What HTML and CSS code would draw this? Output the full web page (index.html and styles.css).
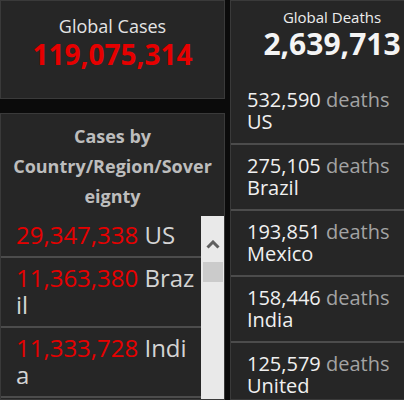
FILE: index.html
```html
<!DOCTYPE html>
<html lang="en">
<head>
    <meta charset="UTF-8">
    <title>COVID-19 Dashboard</title>
    <link rel="stylesheet" href="styles.css">
</head>
<body>
    <div class="dashboard">
        <div class="left-column">
            <div class="panel total-cases">
                <div class="total-title">Global Cases</div>
                <div class="total-value">119,075,314</div>
            </div>

            <div class="panel cases-list">
                <h2 class="list-title">Cases by<br>Country/Region/Sovereignty</h2>
                <div class="list-wrap">
                    <ul class="case-items">
                        <li><span class="count">29,347,338</span> US</li>
                        <li><span class="count">11,363,380</span> Brazil</li>
                        <li><span class="count">11,333,728</span> India</li>
                    </ul>
                    <div class="scrollbar">
                        <svg class="scroll-up" width="14" height="9" viewBox="0 0 14 9">
                            <path d="M1.5 7.5 L7 2 L12.5 7.5" fill="none" stroke="#5f5f5f" stroke-width="3"/>
                        </svg>
                        <div class="scroll-thumb"></div>
                    </div>
                </div>
            </div>
        </div>

        <div class="panel deaths">
            <div class="deaths-header">
                <div class="deaths-title">Global Deaths</div>
                <div class="deaths-value">2,639,713</div>
            </div>
            <ul class="death-items">
                <li><span class="num">532,590</span> <span class="unit">deaths</span><br>US</li>
                <li><span class="num">275,105</span> <span class="unit">deaths</span><br>Brazil</li>
                <li><span class="num">193,851</span> <span class="unit">deaths</span><br>Mexico</li>
                <li><span class="num">158,446</span> <span class="unit">deaths</span><br>India</li>
                <li><span class="num">125,579</span> <span class="unit">deaths</span><br>United Kingdom</li>
            </ul>
        </div>
    </div>
</body>
</html>
```

FILE: styles.css
```css
body {
    margin: 0;
    background-color: #0b0b0b;
    font-family: "Open Sans", "Noto Sans", sans-serif;
    overflow: hidden;
}
ul {
    list-style: none;
    margin: 0;
    padding: 0;
}
.dashboard {
    display: grid;
    grid-template-columns: 225px 204px;
    column-gap: 5px;
    height: 400px;
    width: 434px;
}
.left-column {
    display: flex;
    flex-direction: column;
    gap: 14px;
    min-height: 0;
}
.panel {
    background-color: #262626;
    border: 1px solid #3a3a3a;
    box-sizing: border-box;
    overflow: hidden;
}

/* Global cases */
.total-cases {
    height: 99px;
    padding-top: 13px;
    text-align: center;
}
.total-title {
    font-size: 18px;
    line-height: 24px;
    color: #e4e4e4;
}
.total-value {
    font-size: 28px;
    line-height: 32px;
    font-weight: 700;
    color: #e60000;
}

/* Cases list */
.cases-list {
    flex: 1;
    display: flex;
    flex-direction: column;
    min-height: 0;
}
.list-title {
    margin: 0;
    padding: 7px 9px 5px;
    font-size: 18px;
    line-height: 30px;
    font-weight: 700;
    color: #bdbdbd;
    text-align: center;
    word-break: break-all;
}
.list-wrap {
    flex: 1;
    display: flex;
    min-height: 0;
}
.case-items {
    flex: 1;
    overflow: hidden;
}
.case-items li {
    padding: 6px 3px 8px 15px;
    font-size: 24px;
    line-height: 27px;
    color: #d4d4d4;
    word-break: break-all;
    border-bottom: 2px solid #4c4c4c;
}
.case-items li:first-child {
    padding-top: 5px;
}
.count {
    color: #e60000;
}
.scrollbar {
    width: 23px;
    background-color: #e9e9e9;
    display: flex;
    flex-direction: column;
    align-items: center;
}
.scroll-up {
    margin-top: 24px;
}
.scroll-thumb {
    width: 20px;
    height: 20px;
    margin-top: 13px;
    background-color: #cbcbcb;
}

/* Global deaths */
.deaths-header {
    padding: 7px 0 17px;
    text-align: center;
}
.deaths-title {
    font-size: 15px;
    line-height: 18px;
    color: #ededed;
}
.deaths-value {
    font-size: 30px;
    line-height: 36px;
    font-weight: 700;
    color: #f4f4f4;
}
.death-items li {
    padding: 10px 40px 10px 16px;
    font-size: 20px;
    line-height: 22px;
    color: #f0f0f0;
    border-bottom: 2px solid #4c4c4c;
}
.unit {
    color: #a3a3a3;
}
```
